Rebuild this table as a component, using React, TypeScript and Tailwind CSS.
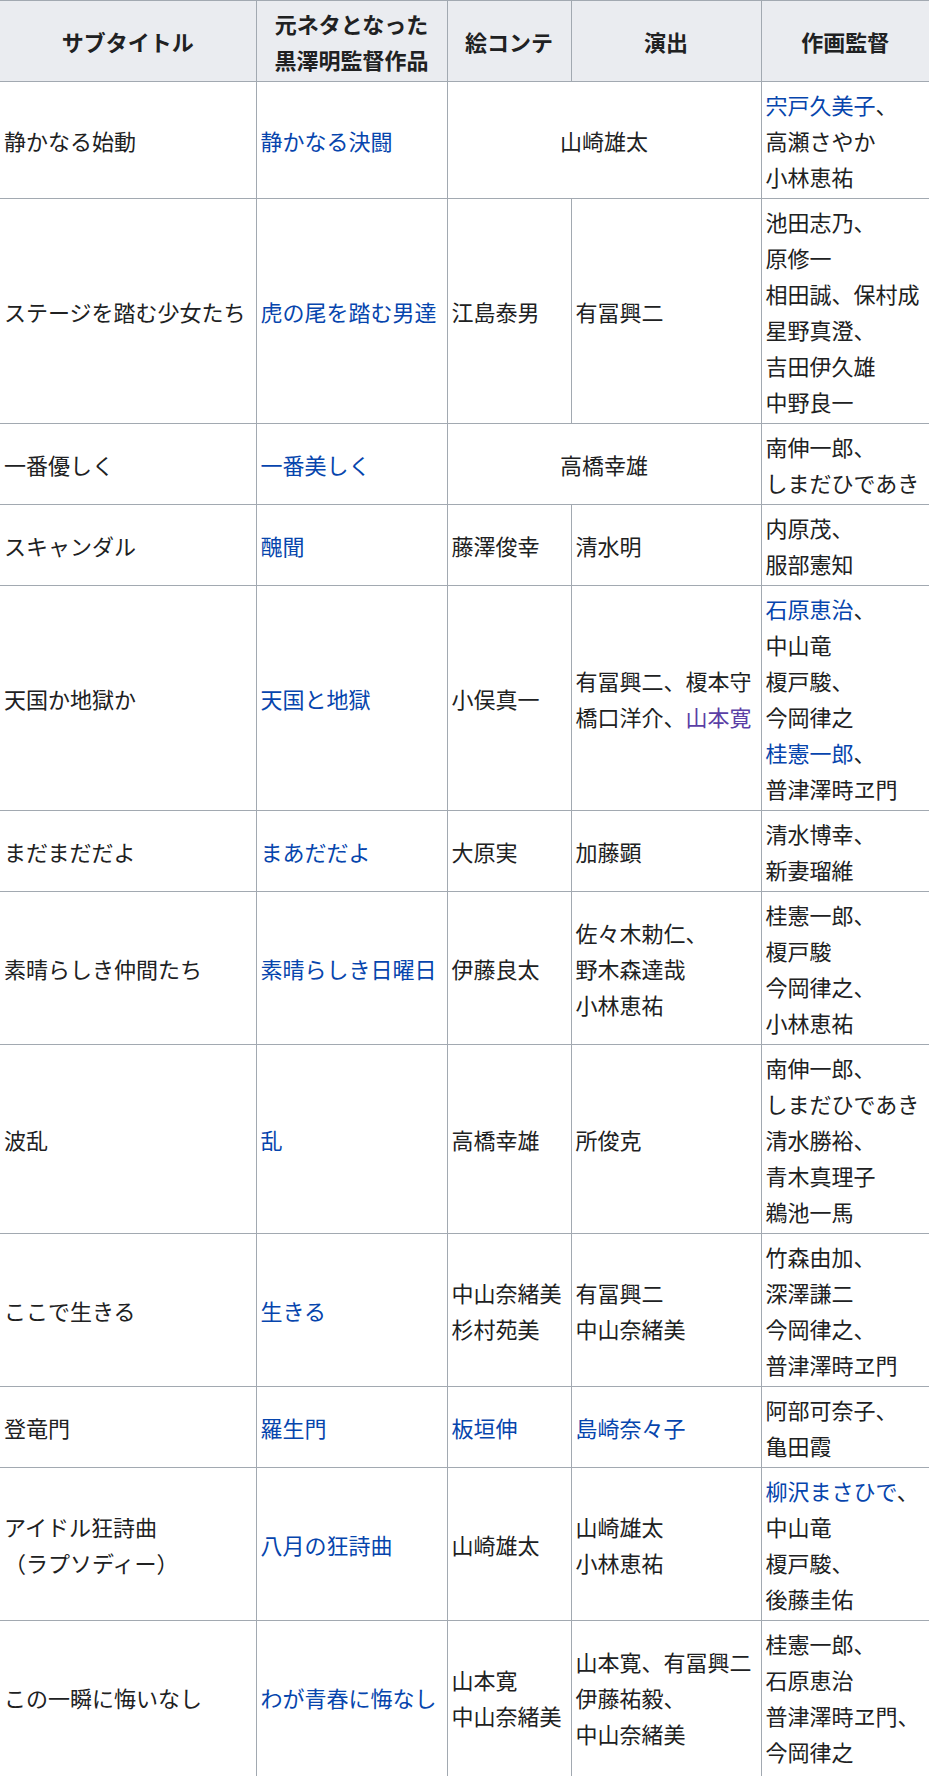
import type { ReactNode } from 'react';

type Seg = string | { t: string; kind: 'link' | 'visited' };
type Line = Seg | Seg[];

interface Cell {
  lines: Line[];
  span?: number;
}

const A = (t: string): Seg => ({ t, kind: 'link' });
const V = (t: string): Seg => ({ t, kind: 'visited' });

const c = (...lines: Line[]): Cell => ({ lines });
const wide = (...lines: Line[]): Cell => ({ lines, span: 2 });

const headers: ReactNode[] = [
  'サブタイトル',
  <>
    元ネタとなった
    <br />
    黒澤明監督作品
  </>,
  '絵コンテ',
  '演出',
  '作画監督',
];

const rows: Cell[][] = [
  [c('静かなる始動'), c(A('静かなる決闘')), wide('山崎雄太'), c([A('宍戸久美子'), '、'], '高瀬さやか', '小林恵祐')],
  [
    c('ステージを踏む少女たち'),
    c(A('虎の尾を踏む男達')),
    c('江島泰男'),
    c('有冨興二'),
    c('池田志乃、', '原修一', '相田誠、保村成', '星野真澄、', '吉田伊久雄', '中野良一'),
  ],
  [c('一番優しく'), c(A('一番美しく')), wide('高橋幸雄'), c('南伸一郎、', 'しまだひであき')],
  [c('スキャンダル'), c(A('醜聞')), c('藤澤俊幸'), c('清水明'), c('内原茂、', '服部憲知')],
  [
    c('天国か地獄か'),
    c(A('天国と地獄')),
    c('小俣真一'),
    c('有冨興二、榎本守', ['橋口洋介、', V('山本寛')]),
    c([A('石原恵治'), '、'], '中山竜', '榎戸駿、', '今岡律之', [A('桂憲一郎'), '、'], '普津澤時ヱ門'),
  ],
  [c('まだまだだよ'), c(A('まあだだよ')), c('大原実'), c('加藤顕'), c('清水博幸、', '新妻瑠維')],
  [
    c('素晴らしき仲間たち'),
    c(A('素晴らしき日曜日')),
    c('伊藤良太'),
    c('佐々木勅仁、', '野木森達哉', '小林恵祐'),
    c('桂憲一郎、', '榎戸駿', '今岡律之、', '小林恵祐'),
  ],
  [
    c('波乱'),
    c(A('乱')),
    c('高橋幸雄'),
    c('所俊克'),
    c('南伸一郎、', 'しまだひであき', '清水勝裕、', '青木真理子', '鵜池一馬'),
  ],
  [
    c('ここで生きる'),
    c(A('生きる')),
    c('中山奈緒美', '杉村苑美'),
    c('有冨興二', '中山奈緒美'),
    c('竹森由加、', '深澤謙二', '今岡律之、', '普津澤時ヱ門'),
  ],
  [c('登竜門'), c(A('羅生門')), c(A('板垣伸')), c(A('島崎奈々子')), c('阿部可奈子、', '亀田霞')],
  [
    c('アイドル狂詩曲', '（ラプソディー）'),
    c(A('八月の狂詩曲')),
    c('山崎雄太'),
    c('山崎雄太', '小林恵祐'),
    c([A('柳沢まさひで'), '、'], '中山竜', '榎戸駿、', '後藤圭佑'),
  ],
  [
    c('この一瞬に悔いなし'),
    c(A('わが青春に悔なし')),
    c('山本寛', '中山奈緒美'),
    c('山本寛、有冨興二', '伊藤祐毅、', '中山奈緒美'),
    c('桂憲一郎、', '石原恵治', '普津澤時ヱ門、', '今岡律之'),
  ],
];

function renderSeg(seg: Seg, key: number) {
  if (typeof seg === 'string') return <span key={key}>{seg}</span>;
  return (
    <a key={key} className={seg.kind === 'link' ? 'text-[#0645ad]' : 'text-[#5b3fa6]'}>
      {seg.t}
    </a>
  );
}

function renderLine(line: Line, i: number) {
  const segs = Array.isArray(line) ? line : [line];
  return <div key={i}>{segs.map(renderSeg)}</div>;
}

const cellCls = 'border-b border-l border-[#a2a9b1] first:border-l-0 px-[4px] py-[4px] whitespace-nowrap';

export default function App() {
  return (
    <div
      className="min-h-[1776px] w-[929px] bg-white text-[22px] leading-[36px] text-[#202122]"
      style={{ fontFamily: '"Noto Sans CJK JP", "Noto Sans", sans-serif' }}
    >
      <table className="w-[929px] table-fixed border-collapse">
        <colgroup>
          <col className="w-[256px]" />
          <col className="w-[191px]" />
          <col className="w-[124px]" />
          <col className="w-[190px]" />
          <col className="w-[168px]" />
        </colgroup>
        <thead>
          <tr className="bg-[#eaecf0]">
            {headers.map((h, i) => (
              <th key={i} className={`${cellCls} border-t text-center font-bold`}>
                {h}
              </th>
            ))}
          </tr>
        </thead>
        <tbody>
          {rows.map((row, r) => (
            <tr key={r} className="last:[&>td]:pb-[7px]">
              {row.map((cell, i) => (
                <td
                  key={i}
                  colSpan={cell.span}
                  className={`${cellCls} align-middle ${cell.span ? 'text-center' : 'text-left'}`}
                >
                  {cell.lines.map(renderLine)}
                </td>
              ))}
            </tr>
          ))}
        </tbody>
      </table>
    </div>
  );
}
